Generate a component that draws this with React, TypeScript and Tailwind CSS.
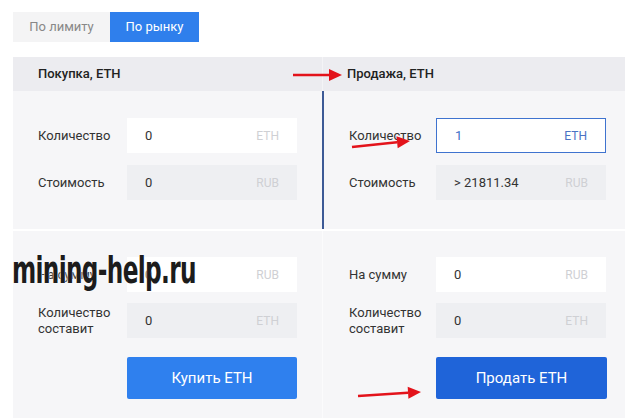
const font = "font-['Roboto','Liberation_Sans',sans-serif]";

function Field({ value, unit, active, filled }: { value: string; unit: string; active?: boolean; filled?: boolean }) {
  return (
    <div
      className={
        "flex h-[35px] w-[170px] items-center justify-between px-[18px] text-[13px] " +
        (filled ? "bg-[#eeeff2] " : "bg-white ") +
        (active ? "border border-[#3f73cf] text-[#3f6fc9]" : "text-[#333]")
      }
    >
      <span>{value}</span>
      <span className={active ? "text-[#4a72c4] text-[12px]" : "text-[#cfd0d4] text-[12px]"}>{unit}</span>
    </div>
  );
}

function Row({ label, children, right }: { label: React.ReactNode; children: React.ReactNode; right?: boolean }) {
  return (
    <div className="flex items-center">
      <div className={(right ? "w-[87px]" : "w-[89px]") + " text-[13px] leading-[16px] text-[#333]"}>{label}</div>
      {children}
    </div>
  );
}

function Arrow({ x1, y1, x2, y2 }: { x1: number; y1: number; x2: number; y2: number }) {
  const a = Math.atan2(y2 - y1, x2 - x1);
  const L = 13;
  const W = 6;
  const bx = x2 - L * Math.cos(a);
  const by = y2 - L * Math.sin(a);
  const px = -Math.sin(a) * W;
  const py = Math.cos(a) * W;
  return (
    <g>
      <line x1={x1} y1={y1} x2={bx} y2={by} stroke="#e3131b" strokeWidth="2.5" />
      <polygon points={`${x2},${y2} ${bx + px},${by + py} ${bx - px},${by - py}`} fill="#e3131b" />
    </g>
  );
}

export default function App() {
  return (
    <div className={`relative h-[418px] w-[634px] overflow-hidden bg-white ${font}`}>
      <div className="px-[13px] pt-3">
        <div className="flex h-[30px] text-[13px]">
          <div className="flex w-[97px] items-center justify-center bg-[#f4f4f5] text-[#888]">По лимиту</div>
          <div className="flex w-[89px] items-center justify-center bg-[#2f7fec] text-white">По рынку</div>
        </div>

        <div className="mt-[15px] w-[612px]">
          <div className="grid h-[34px] grid-cols-[309px_303px] bg-[#ececf0] text-[13px] font-medium text-[#222]">
            <div className="flex items-center pl-[25px]">Покупка, ETH</div>
            <div className="flex items-center border-l border-[#f4f4f6] pl-[24px]">Продажа, ETH</div>
          </div>

          <div className="grid grid-cols-[309px_303px] bg-[#f6f6f8]">
            <div className="flex flex-col gap-[12px] pb-[29px] pl-[25px] pt-[27px]">
              <Row label="Количество"><Field value="0" unit="ETH" /></Row>
              <Row label="Стоимость"><Field value="0" unit="RUB" filled /></Row>
            </div>
            <div className="flex flex-col gap-[12px] border-l-2 border-[#3d5a96] pb-[29px] pl-[25px] pt-[27px]">
              <Row right label="Количество"><Field value="1" unit="ETH" active /></Row>
              <Row right label="Стоимость"><Field value="> 21811.34" unit="RUB" filled /></Row>
            </div>
          </div>

          <div className="mt-[2px] grid h-[188px] grid-cols-[309px_303px] bg-[#f6f6f8]">
            <div className="flex flex-col gap-[11px] pl-[25px] pt-[26px]">
              <Row label="На сумму"><Field value="0" unit="RUB" /></Row>
              <Row label={<>Количество<br />составит</>}><Field value="0" unit="ETH" filled /></Row>
              <div className="mt-[8px] flex pl-[89px]">
                <button className="h-[42px] w-[170px] rounded-[2px] bg-[#2f80ee] text-[15px] text-white">Купить ETH</button>
              </div>
            </div>
            <div className="flex flex-col gap-[11px] border-l border-[#fbfbfc] pl-[26px] pt-[26px]">
              <Row right label="На сумму"><Field value="0" unit="RUB" /></Row>
              <Row right label={<>Количество<br />составит</>}><Field value="0" unit="ETH" filled /></Row>
              <div className="mt-[8px] flex pl-[87px]">
                <button className="h-[42px] w-[171px] rounded-[2px] bg-[#1f64d9] text-[15px] text-white">Продать ETH</button>
              </div>
            </div>
          </div>
        </div>
      </div>

      <div className="absolute left-[12px] top-[251px] origin-left scale-x-[0.68] whitespace-nowrap font-['DejaVu_Sans_Condensed','DejaVu_Sans',sans-serif] text-[38px] font-bold leading-[38px] tracking-[-1px] text-[#1c1c1c] [text-shadow:0_0_2px_#fff,0_0_1px_#fff]">
        mining-help.ru
      </div>

      <svg className="pointer-events-none absolute left-0 top-0" width="634" height="418">
        <Arrow x1={293} y1={75} x2={342} y2={75} />
        <Arrow x1={352} y1={147} x2={410} y2={141} />
        <Arrow x1={358} y1={396} x2={421} y2={392} />
      </svg>
    </div>
  );
}
